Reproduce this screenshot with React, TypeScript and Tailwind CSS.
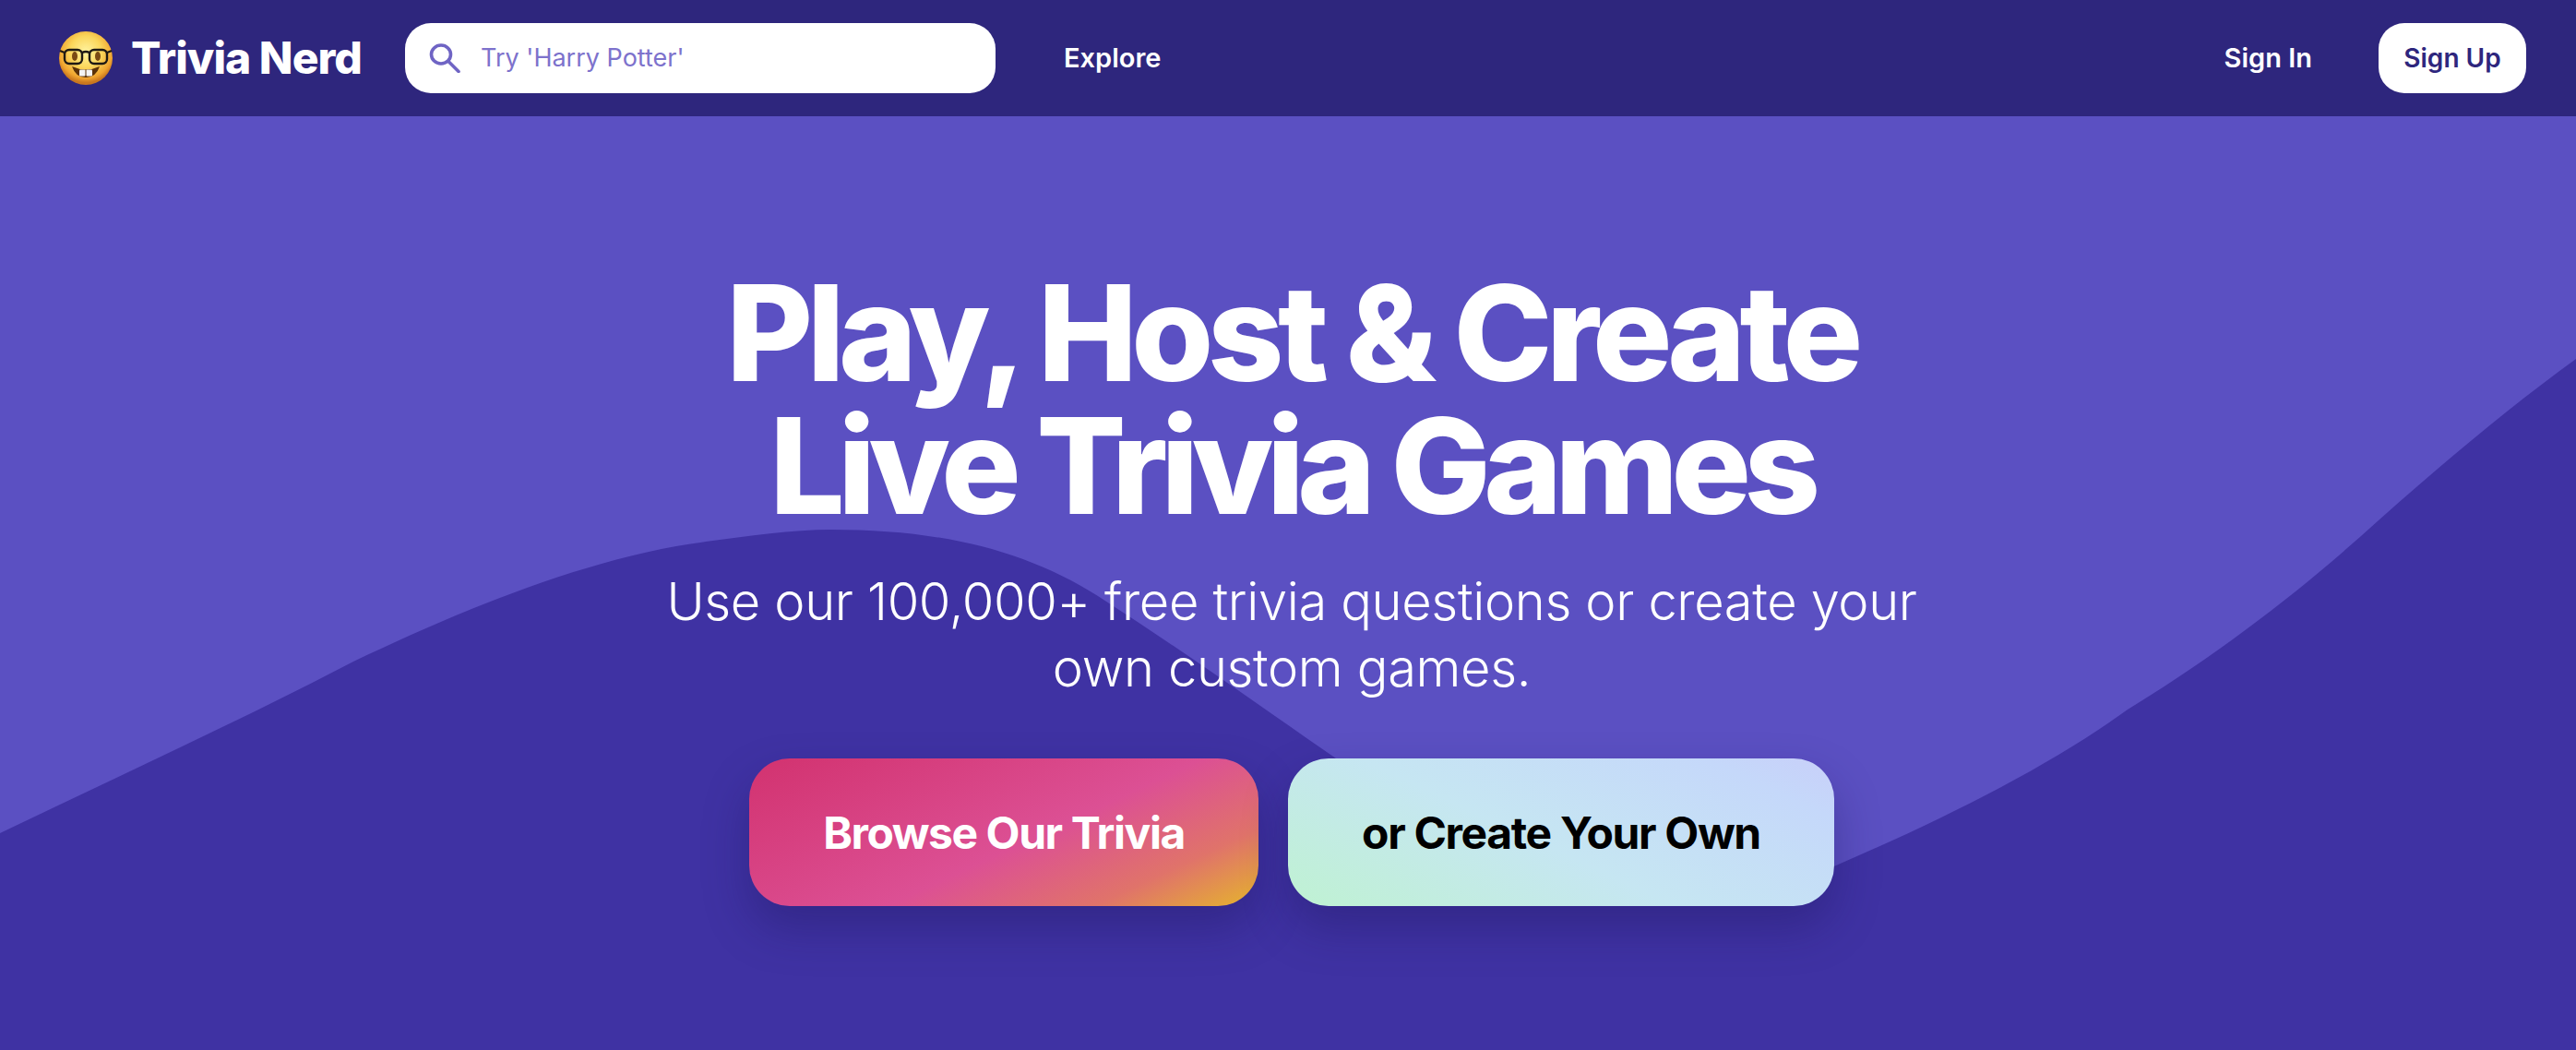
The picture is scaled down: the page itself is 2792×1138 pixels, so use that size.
import React from "react";

const NerdFace: React.FC = () => (
  <svg width="60" height="60" viewBox="0 0 60 60" className="shrink-0">
    <defs>
      <radialGradient id="face" cx="50%" cy="38%" r="58%">
        <stop offset="0%" stopColor="#fff3a0" />
        <stop offset="50%" stopColor="#fbd75c" />
        <stop offset="85%" stopColor="#f0a530" />
        <stop offset="100%" stopColor="#c9771f" />
      </radialGradient>
    </defs>
    <circle cx="30" cy="30" r="29" fill="url(#face)" />
    <ellipse cx="18" cy="28" rx="3" ry="5" fill="#7a4a14" />
    <ellipse cx="43" cy="28" rx="3" ry="5" fill="#7a4a14" />
    <path d="M15 39 Q30 46 45 39 Q41 51 30 51 Q19 51 15 39 Z" fill="#5b3208" />
    <rect x="23" y="42.5" width="6.5" height="7" rx="1" fill="#f4f4f4" />
    <rect x="30.5" y="42.5" width="6.5" height="7" rx="1" fill="#f4f4f4" />
    <g fill="none" stroke="#1f1a14" strokeWidth="2.4">
      <rect x="7" y="21" width="19" height="15" rx="5" />
      <rect x="34" y="21" width="19" height="15" rx="5" />
      <path d="M26 24 Q30 22 34 24" />
      <path d="M7 24 L2 22" />
      <path d="M53 24 L58 22" />
    </g>
  </svg>
);

const SearchGlyph: React.FC = () => (
  <svg width="34" height="32" viewBox="0 0 34 32" fill="none" stroke="#6f64c4" strokeWidth="3.6" className="shrink-0">
    <ellipse cx="13" cy="12" rx="10.5" ry="10" />
    <path d="M21 19.5 L32 30.5" strokeLinecap="round" />
  </svg>
);

export default function App() {
  return (
    <div className="w-full min-h-[1138px] flex flex-col font-['Inter',sans-serif]">
      <nav className="h-[126px] bg-[#2e267d] flex items-center pl-[63px] pr-[54px] shrink-0">
        <NerdFace />
        <span className="ml-[19px] text-[48px] font-extrabold tracking-[-0.02em] text-white whitespace-nowrap">Trivia Nerd</span>
        <div className="ml-[47px] w-[640px] h-[76px] bg-white rounded-[28px] flex items-center pl-[26px]">
          <SearchGlyph />
          <span className="ml-[22px] text-[27px] text-[#7d72cc]">Try 'Harry Potter'</span>
        </div>
        <a className="ml-[74px] text-[29px] font-semibold text-white">Explore</a>
        <div className="flex-1" />
        <a className="text-[29px] font-semibold text-white">Sign In</a>
        <a className="ml-[72px] h-[76px] w-[160px] rounded-[28px] bg-white flex items-center justify-center text-[28px] font-semibold text-[#2e267d]">Sign Up</a>
      </nav>

      <main className="relative flex-1 bg-[#5b50c2] overflow-hidden flex flex-col items-center pt-[163px] pl-[8px]">
        <svg viewBox="0 0 2792 1012" preserveAspectRatio="none" className="absolute inset-0 w-full h-full">
          <path
            d="M0 777 C 130 715 260 655 383 591 C 500 535 640 477 765 461 C 810 455 860 448 900 448 C 1020 448 1110 470 1190 520 C 1280 578 1350 628 1435 687 C 1560 775 1700 850 1800 850 C 1870 850 1930 838 1990 812 C 2110 760 2220 705 2306 643 C 2400 585 2480 525 2559 455 C 2640 382 2720 315 2792 263 L2792 1012 L0 1012 Z"
            fill="#3f32a3"
          />
        </svg>
        <h1 className="relative text-[144px] leading-[144px] font-extrabold text-white text-center">
          <span className="block tracking-[-0.045em]">Play, Host &amp; Create</span>
          <span className="block tracking-[-0.052em]">Live Trivia Games</span>
        </h1>
        <p className="relative mt-[39px] w-[1400px] text-[56px] leading-[72px] font-light tracking-[-0.35px] text-white text-center">
          Use our 100,000+ free trivia questions or create your
          <br />
          own custom games.
        </p>
        <div className="relative mt-[62px] flex gap-[32px]">
          <a className="w-[552px] h-[160px] pt-[2px] rounded-[44px] flex items-center justify-center text-[48px] font-bold tracking-[-0.03em] text-white bg-[linear-gradient(155deg,#d2326f_0%,#dc5094_55%,#e0736a_80%,#e5b52c_100%)] shadow-[0_24px_48px_rgba(30,20,90,0.35)]">
            Browse Our Trivia
          </a>
          <a className="w-[592px] h-[160px] pt-[2px] rounded-[44px] flex items-center justify-center text-[48px] font-bold tracking-[-0.028em] text-black bg-[linear-gradient(25deg,#bff2d2_0%,#c6e6f2_45%,#c5d8fa_85%,#c8cff9_100%)] shadow-[0_24px_48px_rgba(30,20,90,0.35)]">
            or Create Your Own
          </a>
        </div>
      </main>
    </div>
  );
}
